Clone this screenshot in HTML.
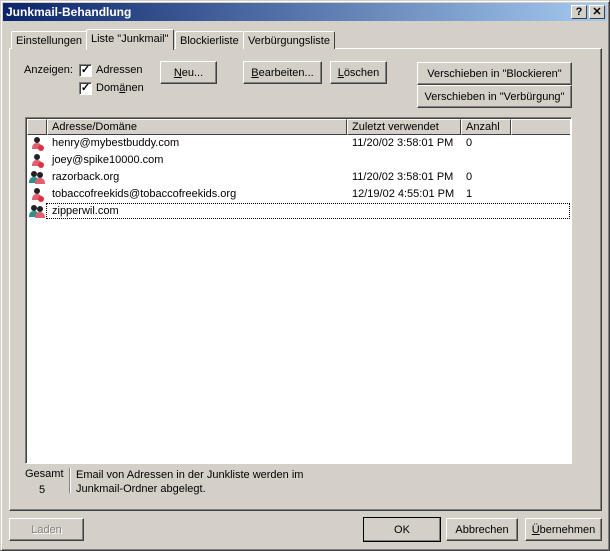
<!DOCTYPE html><html><head><style>
*{box-sizing:border-box}
body{margin:0;width:610px;height:551px;background:#d4d0c8;font:11px "Liberation Sans",sans-serif;color:#000;position:relative;overflow:hidden}
.a{position:absolute}
.win{left:0;top:0;width:610px;height:551px;border:1px solid;border-color:#d4d0c8 #404040 #404040 #d4d0c8;box-shadow:inset 1px 1px #fff,inset -1px -1px #808080}
.title{left:3px;top:3px;width:604px;height:18px;background:linear-gradient(90deg,#0a246a,#a6caf0);color:#fff;font-weight:bold;font-size:12px;padding:2px 3px}
.tb{width:16px;height:14px;top:5px;background:#d4d0c8;border:1px solid;border-color:#fff #404040 #404040 #fff;font-weight:bold;font-size:11px;text-align:center;line-height:12px;color:#000}
.btn{background:#d4d0c8;border:1px solid;border-color:#fff #404040 #404040 #fff;box-shadow:inset -1px -1px #808080;text-align:center;display:flex;align-items:center;justify-content:center}
.panel{left:9px;top:48px;width:593px;height:463px;border:1px solid;border-color:#fff #404040 #404040 #fff;box-shadow:inset -1px -1px #808080}
.tab{top:31px;height:18px;border:1px solid;border-bottom:none;border-color:#fff #404040 #404040 #fff;padding:3px 4px 0;background:#d4d0c8;border-radius:2px 2px 0 0}
.cb{width:13px;height:13px;background:#fff;border:1px solid;border-color:#808080 #fff #fff #808080;box-shadow:inset 1px 1px #404040;font-size:11px;line-height:10px;text-align:center;font-weight:bold}
.lv{left:25px;top:117px;width:547px;height:347px;background:#fff;border:1px solid;border-color:#808080 #fff #fff #808080;box-shadow:inset 1px 1px #404040}
.hd{top:119px;height:16px;background:#d4d0c8;border:1px solid;border-color:#fff #404040 #404040 #fff;padding:1px 4px}
.r{left:52px;height:16px}
u{text-decoration:underline}
</style></head><body>
<div class="a win"></div>
<div class="a title">Junkmail-Behandlung</div>
<div class="a tb" style="left:571px">?</div>
<div class="a tb" style="left:589px">✕</div>
<div class="a panel"></div>
<div class="a tab" style="left:11px">Einstellungen</div>
<div class="a tab" style="left:86px;top:29px;height:21px;padding-top:3px;z-index:2;border-bottom:none">Liste "Junkmail"</div>
<div class="a tab" style="left:175px">Blockierliste</div>
<div class="a tab" style="left:243px">Verbürgungsliste</div>
<div class="a" style="left:24px;top:64px">Anzeigen:</div>
<div class="a cb" style="left:79px;top:64px">✓</div><div class="a" style="left:96px;top:64px">Adressen</div>
<div class="a cb" style="left:79px;top:82px">✓</div><div class="a" style="left:96px;top:82px">Dom<u>ä</u>nen</div>
<div class="a btn" style="left:160px;top:61px;width:57px;height:23px"><span><u>N</u>eu...</span></div>
<div class="a btn" style="left:243px;top:61px;width:79px;height:23px"><span><u>B</u>earbeiten...</span></div>
<div class="a btn" style="left:330px;top:61px;width:57px;height:23px"><span><u>L</u>öschen</span></div>
<div class="a btn" style="left:417px;top:62px;width:155px;height:23px">Verschieben in "Blockieren"</div>
<div class="a btn" style="left:417px;top:85px;width:155px;height:23px">Verschieben in "Verbürgung"</div>
<div class="a lv"></div>
<div class="a hd" style="left:27px;width:20px"></div>
<div class="a hd" style="left:47px;width:300px">Adresse/Domäne</div>
<div class="a hd" style="left:347px;width:114px">Zuletzt verwendet</div>
<div class="a hd" style="left:461px;width:50px">Anzahl</div>
<div class="a hd" style="left:511px;width:59px;border-right:none"></div>
<div class="a r" style="top:137px">henry@mybestbuddy.com</div><div class="a" style="left:352px;top:137px">11/20/02 3:58:01 PM</div><div class="a" style="left:466px;top:137px">0</div>
<div class="a r" style="top:154px">joey@spike10000.com</div>
<div class="a r" style="top:171px">razorback.org</div><div class="a" style="left:352px;top:171px">11/20/02 3:58:01 PM</div><div class="a" style="left:466px;top:171px">0</div>
<div class="a r" style="top:188px">tobaccofreekids@tobaccofreekids.org</div><div class="a" style="left:352px;top:188px">12/19/02 4:55:01 PM</div><div class="a" style="left:466px;top:188px">1</div>
<div class="a" style="left:46px;top:203px;width:524px;height:16px;border:1px dotted #000;padding:1px 5px">zipperwil.com</div>
<svg class="a" style="left:29px;top:136px" width="16" height="90">
<g id="p"><circle cx="8" cy="4" r="3" fill="#222"/><path d="M3 13 Q3 7 8 7 Q13 7 13 13Z" fill="#e06070"/><circle cx="12" cy="12" r="3" fill="#e03040"/></g>
<use href="#p" y="17"/>
<g transform="translate(0,34)"><circle cx="5" cy="4" r="3" fill="#222"/><path d="M0 13 Q0 7 5 7 Q10 7 10 13Z" fill="#2a9090"/><circle cx="11" cy="5" r="3" fill="#222"/><path d="M6 14 Q6 8 11 8 Q16 8 16 14Z" fill="#e06070"/></g>
<use href="#p" y="51"/>
<g transform="translate(0,68)"><circle cx="5" cy="4" r="3" fill="#222"/><path d="M0 13 Q0 7 5 7 Q10 7 10 13Z" fill="#2a9090"/><circle cx="11" cy="5" r="3" fill="#222"/><path d="M6 14 Q6 8 11 8 Q16 8 16 14Z" fill="#e06070"/></g>
</svg>
<div class="a" style="left:25px;top:468px">Gesamt</div>
<div class="a" style="left:39px;top:484px">5</div>
<div class="a" style="left:69px;top:468px;width:2px;height:25px;border-left:1px solid #808080;border-right:1px solid #fff"></div>
<div class="a" style="left:76px;top:468px;line-height:14px">Email von Adressen in der Junkliste werden im<br>Junkmail-Ordner abgelegt.</div>
<div class="a btn" style="left:9px;top:518px;width:75px;height:23px;color:#808080;text-shadow:1px 1px #fff">Laden</div>
<div class="a btn" style="left:363px;top:517px;width:78px;height:25px;outline:1px solid #000;outline-offset:-1px">OK</div>
<div class="a btn" style="left:446px;top:518px;width:72px;height:23px">Abbrechen</div>
<div class="a btn" style="left:525px;top:518px;width:77px;height:23px"><span><u>Ü</u>bernehmen</span></div>
</body></html>
